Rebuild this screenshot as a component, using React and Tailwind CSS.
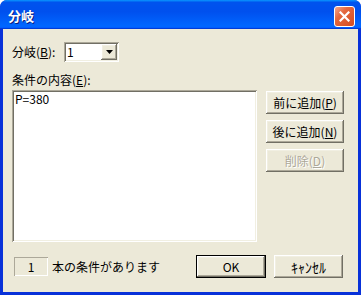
import React from 'react';

const raised =
    'bg-[#ece9d8] shadow-[inset_-1px_-1px_#716f64,inset_1px_1px_#ffffff,inset_-2px_-2px_#aca899,inset_2px_2px_#f1efe2]';
const sunken =
    'bg-white shadow-[inset_1px_1px_#aca899,inset_-1px_-1px_#ffffff,inset_2px_2px_#716f64,inset_-2px_-2px_#f1efe2]';

function Key({ children }) {
    return <span className="underline underline-offset-[1px]">{children}</span>;
}

function CloseButton() {
    return (
        <div className="w-[21px] h-[21px] rounded-[3px] border border-white bg-[linear-gradient(135deg,#f3a88e_0%,#e4683f_35%,#d44c20_100%)] flex items-center justify-center">
            <svg width="11" height="11" viewBox="0 0 11 11" aria-hidden="true">
                <path d="M1.5 1.5 L9.5 9.5 M9.5 1.5 L1.5 9.5" stroke="#ffffff" strokeWidth="2.2" strokeLinecap="square" />
            </svg>
        </div>
    );
}

function Button({ children, disabled, isDefault, className = '' }) {
    const inner = (
        <div
            className={`h-full w-full flex items-center justify-center ${raised} ${
                disabled ? 'text-[#aca899] [text-shadow:1px_1px_0_#ffffff]' : 'text-black'
            }`}
        >
            {children}
        </div>
    );
    if (isDefault) {
        return <div className={`border border-black ${className}`}>{inner}</div>;
    }
    return <div className={className}>{inner}</div>;
}

export default function App() {
    return (
        <div
            className="w-[361px] h-[295px] flex flex-col bg-[#0831d9] rounded-t-[7px] overflow-hidden text-[12px] leading-none text-black"
            style={{ fontFamily: '"Noto Sans CJK JP", "Noto Sans", sans-serif' }}
        >
            {/* caption */}
            <div className="h-[29px] shrink-0 flex items-center pl-[8px] pr-[6px] bg-[linear-gradient(180deg,#0997ff,#0053ee_8%,#0050ee_40%,#0066ff_88%,#0066ff_93%,#005bff_95%,#003dd7_96%,#003dd7)]">
                <span className="font-bold text-[13px] text-white [text-shadow:1px_1px_0_#0a1e80] pt-[2px]">分岐</span>
                <div className="ml-auto mt-[3px]">
                    <CloseButton />
                </div>
            </div>

            {/* body */}
            <div className="flex-1 mx-[3px] mb-[3px] bg-[#ece9d8] pl-[9px] pt-[13px] flex flex-col">
                <div className="flex items-center h-[20px]">
                    <span className="w-[52px]">
                        分岐(<Key>B</Key>):
                    </span>
                    <div className={`w-[55px] h-[20px] flex items-center pl-[3px] pr-[2px] ${sunken}`}>
                        <span className="flex-1">1</span>
                        <div className={`w-[16px] h-[16px] flex items-center justify-center ${raised}`}>
                            <svg width="7" height="4" viewBox="0 0 7 4" aria-hidden="true">
                                <path d="M0 0 H7 L3.5 4 Z" fill="#000000" />
                            </svg>
                        </div>
                    </div>
                </div>

                <div className="mt-[12px] h-[16px]">
                    条件の内容(<Key>E</Key>):
                </div>

                <div className="flex gap-[9px]">
                    <div className={`w-[245px] h-[152px] px-[3px] pt-[3px] ${sunken}`}>P=380</div>
                    <div className="flex flex-col gap-[6px] pt-[1px]">
                        <Button className="w-[78px] h-[23px]">
                            前に追加(<Key>P</Key>)
                        </Button>
                        <Button className="w-[78px] h-[23px]">
                            後に追加(<Key>N</Key>)
                        </Button>
                        <Button className="w-[78px] h-[23px]" disabled>
                            削除(<Key>D</Key>)
                        </Button>
                    </div>
                </div>

                <div className="mt-[13px] flex items-center h-[23px]">
                    <div className="ml-[2px] w-[34px] h-[19px] flex items-center justify-center shadow-[inset_1px_1px_#aca899,inset_-1px_-1px_#ffffff]">
                        1
                    </div>
                    <span className="ml-[4px]">本の条件があります</span>
                    <Button isDefault className="ml-auto w-[70px] h-[23px]">
                        OK
                    </Button>
                    <Button className="ml-[8px] mr-[15px] w-[69px] h-[23px]">
                        <span className="text-[14px]">ｷｬﾝｾﾙ</span>
                    </Button>
                </div>
            </div>
        </div>
    );
}
